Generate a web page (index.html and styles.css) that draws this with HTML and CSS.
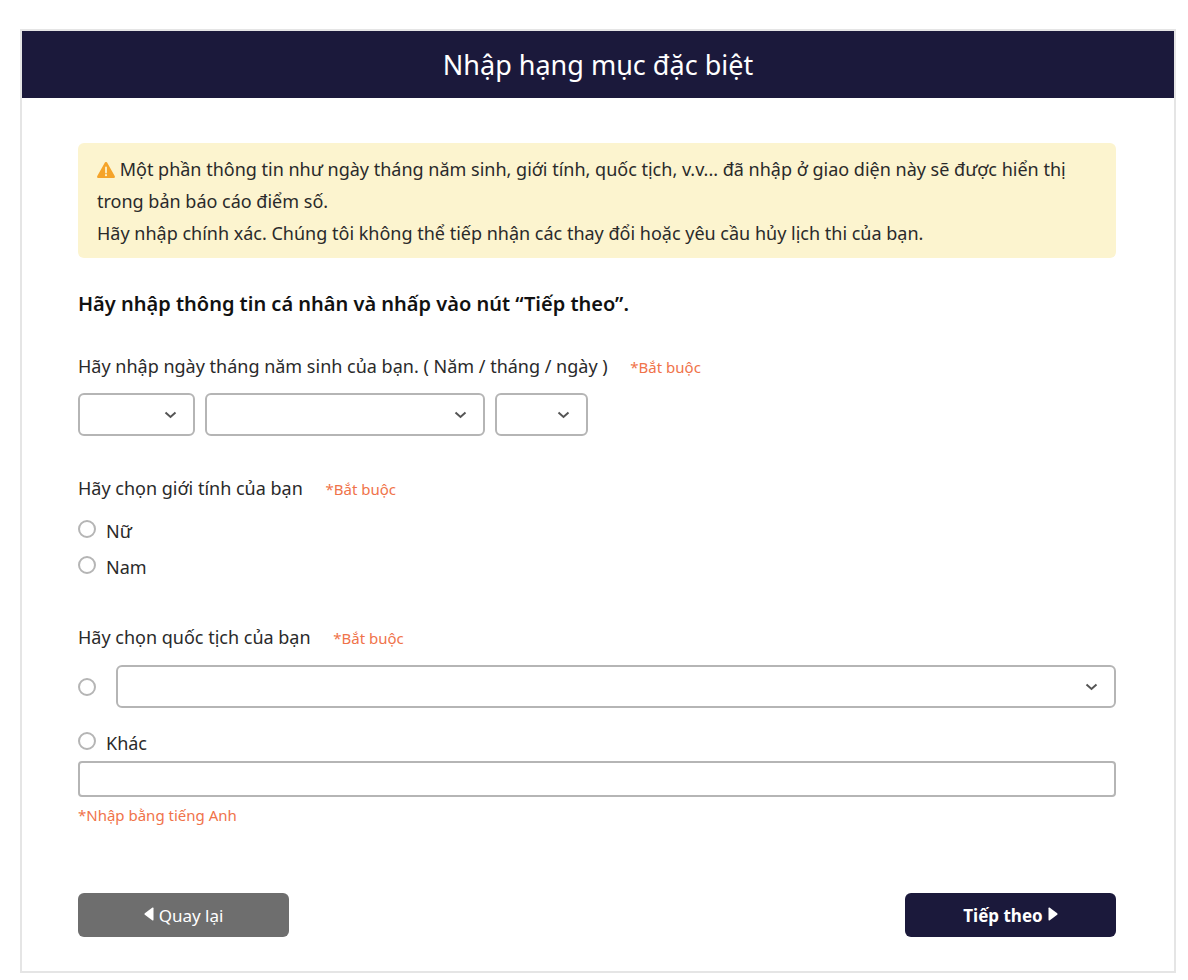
FILE: index.html
```html
<!DOCTYPE html>
<html lang="vi">
<head>
    <meta charset="UTF-8">
    <meta name="viewport" content="width=device-width, initial-scale=1.0">
    <title>Nhập hạng mục đặc biệt</title>
    <link rel="stylesheet" href="styles.css">
</head>
<body>
    <main class="card">
        <h1 class="card-title">Nhập hạng mục đặc biệt</h1>
        <form class="card-body">
            <div class="notice">
                <p><svg class="warning" viewBox="0 0 18 16" aria-hidden="true"><path d="M7.9.6a1.25 1.25 0 0 1 2.2 0l7.6 13.5A1.25 1.25 0 0 1 16.6 16H1.4A1.25 1.25 0 0 1 .3 14.1z" fill="#f5a42a"/><path d="M9 5.5v5" stroke="#fcf4cf" stroke-width="1.8" stroke-linecap="round"/><circle cx="9" cy="13.2" r="1.1" fill="#fcf4cf"/></svg> Một phần thông tin như ngày tháng năm sinh, giới tính, quốc tịch, v.v... đã nhập ở giao diện này sẽ được hiển thị trong bản báo cáo điểm số.</p>
                <p>Hãy nhập chính xác. Chúng tôi không thể tiếp nhận các thay đổi hoặc yêu cầu hủy lịch thi của bạn.</p>
            </div>

            <h2 class="lead">Hãy nhập thông tin cá nhân và nhấp vào nút “Tiếp theo”.</h2>

            <fieldset class="group">
                <legend class="label">Hãy nhập ngày tháng năm sinh của bạn. ( Năm / tháng / ngày ) <span class="required">*Bắt buộc</span></legend>
                <div class="birthday">
                    <div class="select year">
                        <select id="year" aria-label="Năm"><option></option></select>
                        <svg class="chevron" viewBox="0 0 12 8" aria-hidden="true"><path d="M1 1.5l5 4.5 5-4.5"/></svg>
                    </div>
                    <div class="select month">
                        <select id="month" aria-label="Tháng"><option></option></select>
                        <svg class="chevron" viewBox="0 0 12 8" aria-hidden="true"><path d="M1 1.5l5 4.5 5-4.5"/></svg>
                    </div>
                    <div class="select day">
                        <select id="day" aria-label="Ngày"><option></option></select>
                        <svg class="chevron" viewBox="0 0 12 8" aria-hidden="true"><path d="M1 1.5l5 4.5 5-4.5"/></svg>
                    </div>
                </div>
            </fieldset>

            <fieldset class="group">
                <legend class="label">Hãy chọn giới tính của bạn <span class="required">*Bắt buộc</span></legend>
                <div class="genders">
                    <label class="choice"><input type="radio" name="gender" value="female">Nữ</label>
                    <label class="choice"><input type="radio" name="gender" value="male">Nam</label>
                </div>
            </fieldset>

            <fieldset class="group">
                <legend class="label">Hãy chọn quốc tịch của bạn <span class="required">*Bắt buộc</span></legend>
                <div class="country">
                    <input type="radio" name="nationality" value="list" aria-label="Chọn từ danh sách">
                    <div class="select">
                        <select id="country" aria-label="Quốc tịch"><option></option></select>
                        <svg class="chevron" viewBox="0 0 12 8" aria-hidden="true"><path d="M1 1.5l5 4.5 5-4.5"/></svg>
                    </div>
                </div>
                <label class="choice other"><input type="radio" name="nationality" value="other">Khác</label>
                <input class="text" type="text" id="other" aria-label="Quốc tịch khác">
                <p class="hint">*Nhập bằng tiếng Anh</p>
            </fieldset>

            <div class="actions">
                <button class="btn back" type="button"><svg class="arrow" viewBox="0 0 10 14" aria-hidden="true"><path d="M9.5 1.2v11.6q0 1-1 .6L.8 7.8q-.8-.8 0-1.6L8.5.6q1-.4 1 .6z"/></svg>Quay lại</button>
                <button class="btn next" type="submit">Tiếp theo<svg class="arrow" viewBox="0 0 10 14" aria-hidden="true"><path d="M.5 1.2v11.6q0 1 1 .6l7.7-5.6q.8-.8 0-1.6L1.5.6q-1-.4-1 .6z"/></svg></button>
            </div>
        </form>
    </main>
</body>
</html>
```
FILE: styles.css
```css
* {
    box-sizing: border-box;
}
body {
    margin: 0;
    padding: 29px 12px 0 20px;
    font-family: "Noto Sans", "Open Sans", sans-serif;
    font-size: 18px;
    line-height: 32px;
    color: #2a2a2a;
    background-color: #fff;
}
h1, h2, p, fieldset, legend, input {
    margin: 0;
    padding: 0;
}
.card {
    border: 2px solid #e5e5e5;
}
.card-title {
    padding: 18px 0;
    font-size: 27px;
    font-weight: normal;
    line-height: 31px;
    text-align: center;
    color: #fff;
    background-color: #1b193b;
}
.card-body {
    padding: 45px 58px 34px 56px;
}
.notice {
    padding: 10px 19px 9px;
    background-color: #fcf4cf;
    border-radius: 6px;
}
.warning {
    width: 18px;
    height: 16px;
    vertical-align: -2px;
}
.lead {
    margin: 30px 0;
    font-size: 20px;
    font-weight: 600;
    color: #111;
}
.group {
    border: none;
    margin-bottom: 36px;
}
.label {
    display: block;
}
.required {
    margin-left: 18px;
    line-height: 1;
}
.required, .hint {
    font-size: 15px;
    color: #f0734a;
}
.birthday {
    display: flex;
    gap: 10px;
    margin-top: 11px;
}
.select {
    position: relative;
    flex: 1;
}
.year {
    flex: 0 1 117px;
}
.month {
    flex: 0 1 280px;
}
.day {
    flex: 0 1 93px;
}
select {
    display: block;
    width: 100%;
    height: 43px;
    padding: 0 36px 0 12px;
    font: inherit;
    background-color: #fff;
    border: 2px solid #b5b5b5;
    border-radius: 6px;
    appearance: none;
}
.chevron {
    position: absolute;
    top: 18px;
    right: 18px;
    width: 13px;
    height: 8px;
    fill: none;
    stroke: #555;
    stroke-width: 2;
    pointer-events: none;
}
.genders {
    margin-top: 9px;
}
.choice {
    display: flex;
    align-items: center;
    gap: 10px;
    line-height: 36px;
}
input[type="radio"] {
    width: 18px;
    height: 18px;
    border: 2px solid #b5b5b5;
    border-radius: 50%;
    background-color: #fff;
    appearance: none;
}
.choice input[type="radio"] {
    margin-bottom: 4px;
}
input[type="radio"]:checked {
    background-color: #1b193b;
}
.country {
    display: flex;
    align-items: center;
    gap: 20px;
    margin-top: 12px;
}
.other {
    margin-top: 17px;
}
.text {
    display: block;
    width: 100%;
    height: 36px;
    padding: 0 12px;
    font: inherit;
    border: 2px solid #b5b5b5;
    border-radius: 4px;
}
.hint {
    margin-top: 2px;
}
.actions {
    display: flex;
    justify-content: space-between;
    margin-top: 62px;
}
.btn {
    display: flex;
    align-items: center;
    justify-content: center;
    gap: 5px;
    width: 211px;
    height: 44px;
    font-family: inherit;
    font-size: 17px;
    color: #fff;
    border: none;
    border-radius: 6px;
    cursor: pointer;
}
.back {
    background-color: #6e6e6e;
}
.next {
    font-weight: bold;
    background-color: #1b193b;
}
.arrow {
    width: 10px;
    height: 14px;
    margin-bottom: 3px;
    fill: #fff;
}
```
